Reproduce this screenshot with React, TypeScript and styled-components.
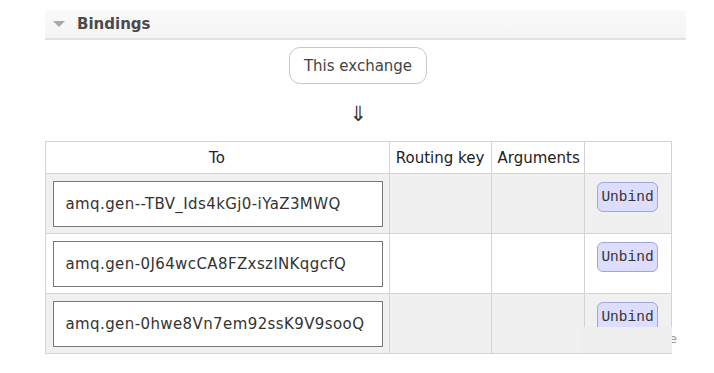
import React from "react";
import styled, { createGlobalStyle } from "styled-components";

const Global = createGlobalStyle`
  html, body { margin: 0; padding: 0; background: #fff; }
  body { font-family: "DejaVu Sans", Verdana, sans-serif; color: #222; }
`;

const Page = styled.div`
  padding: 10px 0 0 45px;
  width: 641px;
  position: relative;
`;

const SectionHeader = styled.div`
  display: flex;
  align-items: center;
  gap: 12px;
  height: 28px;
  padding-left: 8px;
  background: linear-gradient(#fafafa, #f4f4f4);
  border-bottom: 2px solid #e2e2e2;
  font-weight: bold;
  font-size: 15px;
  color: #4a4a4a;
`;

const Triangle = styled.span`
  width: 0;
  height: 0;
  border-left: 6px solid transparent;
  border-right: 6px solid transparent;
  border-top: 6px solid #a8a8a8;
`;

const Body = styled.div`
  width: 626px;
  display: flex;
  flex-direction: column;
  align-items: center;
`;

const SourceBox = styled.div`
  margin-top: 7px;
  height: 35px;
  padding: 0 14px;
  display: flex;
  align-items: center;
  border: 1px solid #c8c8c8;
  border-radius: 11px;
  font-size: 15px;
  color: #444;
`;

const Arrow = styled.div`
  font-size: 21px;
  line-height: 20px;
  margin-top: 20px;
  margin-bottom: 17px;
  color: #333;
`;

const Table = styled.table`
  border-collapse: collapse;
  width: 626px;
  table-layout: fixed;
  font-size: 15px;
`;

const Col = styled.col<{ $w: number }>`
  width: ${(p) => p.$w}px;
`;

const Th = styled.th`
  height: 32px;
  padding: 0 6px;
  border: 1px solid #d4d4d4;
  font-weight: normal;
  text-align: center;
  color: #222;
  white-space: nowrap;
  background: #fff;
  box-sizing: border-box;
`;

const Tr = styled.tr<{ $alt: boolean }>`
  background: ${(p) => (p.$alt ? "#f0f0f0" : "#fff")};
`;

const Td = styled.td`
  height: 60px;
  box-sizing: border-box;
  padding: 7px 6px 5px 7px;
  border: 1px solid #d4d4d4;
  vertical-align: top;
`;

const ButtonCell = styled(Td)`
  text-align: center;
  padding: 8px 0 0;
`;

const NameBox = styled.div`
  height: 44px;
  display: flex;
  align-items: center;
  padding-left: 12px;
  background: #fff;
  border: 1px solid #777;
  font-size: 15px;
  letter-spacing: 0.4px;
  color: #333;
`;

const UnbindButton = styled.button`
  font-family: "Liberation Mono", "Courier New", monospace;
  font-size: 14.5px;
  height: 30px;
  width: 61px;
  padding: 0;
  color: #333;
  background: #ddf;
  border: 1px solid #a3a3dd;
  border-radius: 6px;
`;

const Overlay = styled.div`
  position: absolute;
  left: 580px;
  top: 327px;
  width: 92px;
  height: 26px;
  background: #eeeeee;
`;

const OverlayTail = styled.span`
  position: absolute;
  left: 92px;
  top: 4px;
  width: 5px;
  overflow: hidden;
  font-size: 13px;
  line-height: 16px;
  color: #999;
  direction: rtl;
  white-space: nowrap;
`;

const rows = [
  "amq.gen--TBV_Ids4kGj0-iYaZ3MWQ",
  "amq.gen-0J64wcCA8FZxszlNKqgcfQ",
  "amq.gen-0hwe8Vn7em92ssK9V9sooQ",
];

export default function App() {
  return (
    <>
      <Global />
      <Page>
        <SectionHeader>
          <Triangle />
          <span>Bindings</span>
        </SectionHeader>
        <Body>
          <SourceBox>This exchange</SourceBox>
          <Arrow>⇓</Arrow>
          <Table>
            <colgroup>
              <Col $w={344} />
              <Col $w={102} />
              <Col $w={93} />
              <Col $w={87} />
            </colgroup>
            <thead>
              <tr>
                <Th>To</Th>
                <Th>Routing key</Th>
                <Th>Arguments</Th>
                <Th></Th>
              </tr>
            </thead>
            <tbody>
              {rows.map((name, i) => (
                <Tr key={name} $alt={i % 2 === 0}>
                  <Td>
                    <NameBox>{name}</NameBox>
                  </Td>
                  <Td></Td>
                  <Td></Td>
                  <ButtonCell>
                    <UnbindButton>Unbind</UnbindButton>
                  </ButtonCell>
                </Tr>
              ))}
            </tbody>
          </Table>
        </Body>
        <Overlay>
          <OverlayTail>e</OverlayTail>
        </Overlay>
      </Page>
    </>
  );
}
